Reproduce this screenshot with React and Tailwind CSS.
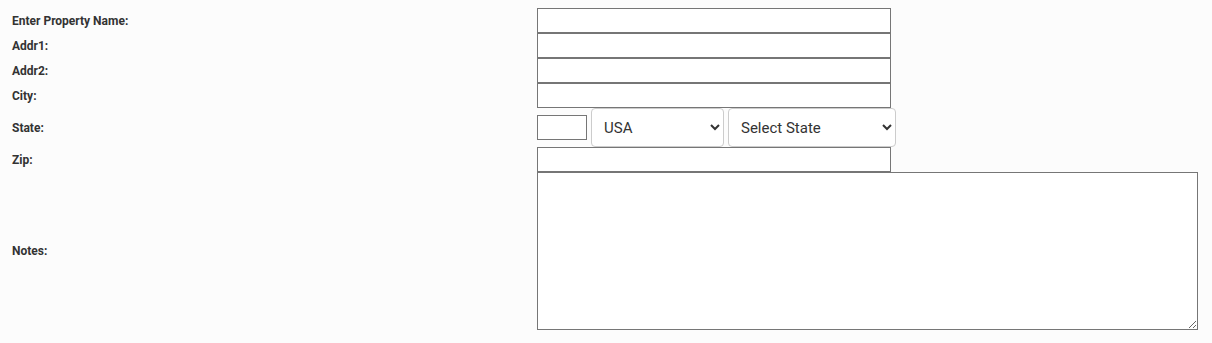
import React from "react";

const Label = ({ children }) => (
  <div className="pl-3 flex items-center text-[12px] font-bold text-[#333]">
    {children}
  </div>
);

const TextInput = ({ className = "w-[354px]" }) => (
  <input
    type="text"
    className={`${className} h-[25px] border border-[#767676] bg-white px-1 text-[13px] outline-none`}
  />
);

export default function App() {
  return (
    <div
      className="min-h-[343px] bg-[#fcfcfc] pt-2 pb-3"
      style={{ fontFamily: "Roboto, 'Liberation Sans', sans-serif" }}
    >
      <div className="grid grid-cols-[537px_1fr]">
        <Label>Enter Property Name:</Label>
        <div className="flex items-center">
          <TextInput />
        </div>

        <Label>Addr1:</Label>
        <div className="flex items-center">
          <TextInput />
        </div>

        <Label>Addr2:</Label>
        <div className="flex items-center">
          <TextInput />
        </div>

        <Label>City:</Label>
        <div className="flex items-center">
          <TextInput />
        </div>

        <Label>State:</Label>
        <div className="flex items-center h-[39px]">
          <TextInput className="w-[50px]" />
          <select className="ml-[4px] w-[133px] h-[39px] rounded border border-[#ccc] bg-white pl-[8px] pr-1 text-[15px] text-[#333]">
            <option>USA</option>
            <option>Canada</option>
          </select>
          <select className="ml-[4px] w-[168px] h-[39px] rounded border border-[#ccc] bg-white pl-[8px] pr-1 text-[15px] text-[#333]">
            <option>Select State</option>
          </select>
        </div>

        <Label>Zip:</Label>
        <div className="flex items-center">
          <TextInput />
        </div>

        <Label>Notes:</Label>
        <div className="flex items-center">
          <textarea className="w-[661px] h-[158px] border border-[#767676] bg-white p-1 text-[13px] outline-none block" />
        </div>
      </div>
    </div>
  );
}
